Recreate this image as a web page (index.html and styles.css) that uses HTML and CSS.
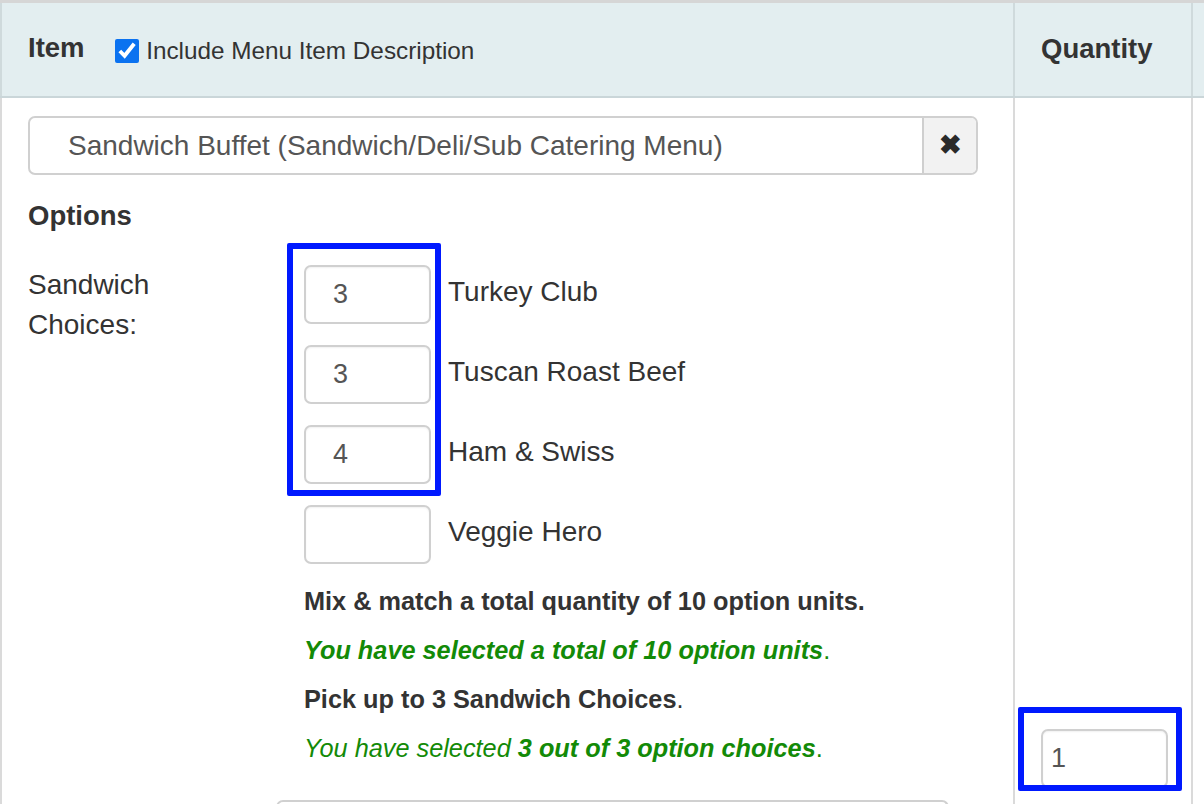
FILE: index.html
```html
<!DOCTYPE html>
<html lang="en">
<head>
  <meta charset="UTF-8" />
  <title>Catering Order</title>
  <link rel="stylesheet" href="styles.css">
</head>
<body>

  <!-- Order items table -->
  <table class="order-table">
    <thead>
      <tr>
        <th class="col-item">
          <span class="th-title">Item</span>
          <label class="desc-toggle">
            <input type="checkbox" checked>
            <span>Include Menu Item Description</span>
          </label>
        </th>
        <th class="col-qty">Quantity</th>
        <th class="col-more"></th>
      </tr>
    </thead>
    <tbody>
      <tr>
        <td class="item-cell">
          <!-- Selected menu item -->
          <div class="item-select">
            <span class="item-name">Sandwich Buffet (Sandwich/Deli/Sub Catering Menu)</span>
            <button class="item-clear" type="button">&#10006;</button>
          </div>

          <h4 class="options-title">Options</h4>

          <div class="option-group">
            <div class="option-label">Sandwich<br>Choices:</div>
            <div class="option-body">
              <div class="choices">
                <div class="highlight hl-choices"></div>
                <div class="choice"><input type="text" value="3"><span>Turkey Club</span></div>
                <div class="choice"><input type="text" value="3"><span>Tuscan Roast Beef</span></div>
                <div class="choice"><input type="text" value="4"><span>Ham &amp; Swiss</span></div>
                <div class="choice"><input type="text" value=""><span>Veggie Hero</span></div>
              </div>

              <p class="rule"><b>Mix &amp; match a total quantity of 10 option units.</b></p>
              <p class="status"><b><i>You have selected a total of 10 option units</i></b>.</p>
              <p class="rule"><b>Pick up to 3 Sandwich Choices</b>.</p>
              <p class="status"><i>You have selected <b>3 out of 3 option choices</b></i>.</p>
            </div>
          </div>

          <div class="next-select"></div>
        </td>
        <td class="qty-cell">
          <div class="qty-wrap">
            <div class="highlight hl-qty"></div>
            <input class="qty-input" type="text" value="1">
          </div>
        </td>
        <td class="more-cell"></td>
      </tr>
    </tbody>
  </table>

</body>
</html>
```

FILE: styles.css
```css
/* Base */
* { box-sizing: border-box; }
body {
  margin: 0;
  font-family: "Liberation Sans", Arial, sans-serif;
  font-size: 28px;
  color: #333;
  background: #fff;
  overflow: hidden;
}

/* Table frame */
.order-table {
  width: 1230px;
  border-collapse: collapse;
  border-top: 3px solid #d6d6d6;
  table-layout: fixed;
}
.order-table th,
.order-table td {
  border-left: 2px solid #dadada;
  vertical-align: top;
  text-align: left;
}
.order-table thead th {
  background: #e3eef0;
  border-left-color: #cfdadc;
  border-bottom: 2px solid #cad6d9;
  height: 95px;
  vertical-align: middle;
  font-weight: bold;
  font-size: 27.5px;
  padding: 0 26px;
}
.col-item { width: 1013px; }
.col-qty { width: 178px; }
.col-more { width: 39px; }

/* Header checkbox */
.th-title {
  position: relative;
  top: -1px;
}
.desc-toggle {
  display: inline-flex;
  align-items: center;
  gap: 7px;
  margin-left: 23px;
  font-weight: normal;
  font-size: 24.3px;
  vertical-align: middle;
}
.desc-toggle input {
  width: 24px;
  height: 24px;
  margin: 0;
  accent-color: #0b72f0;
}

/* Body cells */
.item-cell {
  padding: 18px 26px 0;
  height: 720px;
}

/* Menu item select */
.item-select {
  display: flex;
  width: 950px;
  height: 59px;
  border: 2px solid #d0d0d0;
  border-radius: 7px;
  overflow: hidden;
}
.item-name {
  flex: 1;
  padding: 0 0 0 38px;
  font-size: 28px;
  line-height: 55px;
  color: #555;
}
.item-clear {
  width: 54px;
  border: none;
  border-left: 2px solid #cfcfcf;
  background: #f2f2f2;
  color: #2a2a2a;
  font-size: 27px;
  font-weight: bold;
  padding: 0;
}

.options-title {
  margin: 26px 0 0;
  font-size: 27.5px;
  line-height: 30px;
}

/* Option group */
.option-group {
  display: flex;
  margin-top: 12px;
}
.option-label {
  width: 276px;
  line-height: 40px;
  padding-top: 22px;
}
.option-body {
  flex: 1;
}

.choices {
  position: relative;
  display: flex;
  flex-direction: column;
  gap: 21px;
  padding-top: 22px;
}
.choice {
  display: flex;
  align-items: center;
  gap: 17px;
}
.choice input,
.qty-input {
  width: 127px;
  height: 59px;
  border: 2px solid #d0d0d0;
  border-radius: 7px;
  font-family: inherit;
  font-size: 27px;
  color: #555;
  padding: 0 0 0 27px;
  box-shadow: inset 0 1px 2px rgba(0, 0, 0, 0.06);
}
.choice span {
  position: relative;
  top: -2px;
}

/* Notes under the choices */
.rule,
.status {
  margin: 0;
  font-size: 25.3px;
  line-height: 49px;
}
.choices + .rule { margin-top: 13px; }
.status { color: #138a07; }

.next-select {
  margin: 27px 0 0 248px;
  width: 673px;
  height: 40px;
  border: 2px solid #d0d0d0;
  border-bottom: none;
  border-radius: 7px 7px 0 0;
}

/* Quantity column */
.qty-cell {
  padding: 631px 0 0 26px;
}
.qty-wrap {
  position: relative;
}
.qty-input {
  padding-left: 8px;
}

/* Blue annotation frames */
.highlight {
  position: absolute;
  border: 6px solid #0019ff;
  border-radius: 2px;
  pointer-events: none;
}
.hl-choices {
  left: -17px;
  top: 0;
  width: 154px;
  height: 253px;
}
.hl-qty {
  left: -23px;
  top: -22px;
  width: 164px;
  height: 84px;
}
```
